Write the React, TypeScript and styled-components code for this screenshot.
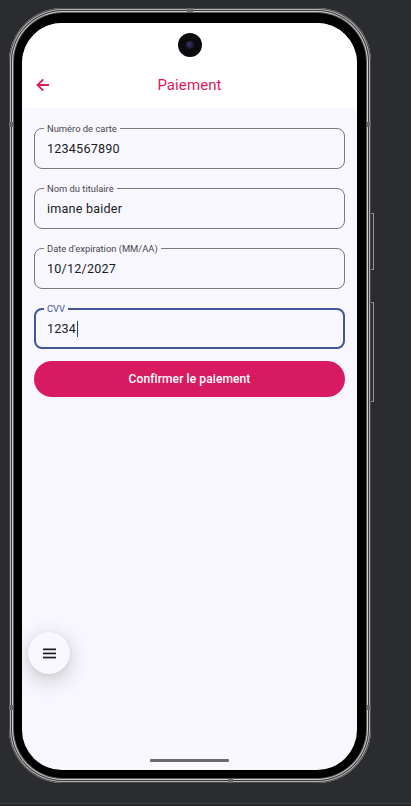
import React from "react";
import styled, { createGlobalStyle } from "styled-components";

const Global = createGlobalStyle`
  html, body { margin: 0; padding: 0; background: #2b2c30; }
  body { font-family: Roboto, "Noto Sans", Arial, sans-serif; }
  * { box-sizing: border-box; }
`;

const Page = styled.div`
  width: 411px;
  height: 806px;
  display: flex;
  flex-direction: column;
  overflow: hidden;
  background: #2b2c30;
`;

const Stage = styled.div`
  flex: 1;
  padding: 8px 0 0 9px;
`;

const BottomEdge = styled.div`
  height: 3px;
  border-top: 1px solid #3d3e42;
  background: #27282c;
`;

const Device = styled.div`
  position: relative;
  width: 362px;
  height: 775px;
  border-radius: 54px;
  background: #000;
  padding: 15px 14px 13px 13px;
  box-shadow:
    inset 0 0 0 1px #4a4a4a,
    inset 0 0 0 2px #b4b4b4,
    inset 0 0 0 3px #3a3a3a,
    inset 0 0 0 4px #cfcfcf,
    inset 0 0 0 5px #575757;
`;

const SideKey = styled.div<{ $top: number; $height: number }>`
  position: absolute;
  right: -3px;
  top: ${(p) => p.$top}px;
  width: 3px;
  height: ${(p) => p.$height}px;
  border-radius: 1px;
  border: 1px solid #9a9a9a;
  border-left: none;
  background: #2b2c30;
`;

const Band = styled.div<{ $side: "left" | "right" | "top" | "bottom"; $at: number }>`
  position: absolute;
  background: #6a6a6a;
  ${(p) =>
    p.$side === "left"
      ? `left: 0; top: ${p.$at}px; width: 4px; height: 5px;`
      : p.$side === "right"
      ? `right: 0; top: ${p.$at}px; width: 4px; height: 5px;`
      : p.$side === "top"
      ? `top: 0; left: ${p.$at}px; width: 6px; height: 4px;`
      : `bottom: 0; left: ${p.$at}px; width: 5px; height: 4px;`}
`;

const Screen = styled.div`
  position: relative;
  width: 335px;
  height: 747px;
  border-radius: 40px;
  overflow: hidden;
  background: #f8f7fd;
  display: flex;
  flex-direction: column;
`;

const Header = styled.header`
  background: #ffffff;
  display: flex;
  flex-direction: column;
`;

const CameraRow = styled.div`
  height: 41px;
  display: flex;
  justify-content: center;
  padding-top: 10px;
`;

const Camera = styled.div`
  width: 24px;
  height: 24px;
  border-radius: 50%;
  background: #0b0b0d;
  display: flex;
  align-items: center;
  justify-content: center;
  &::after {
    content: "";
    width: 8px;
    height: 8px;
    border-radius: 50%;
    background: radial-gradient(circle at 40% 40%, #3b3570 0%, #1b1a2e 60%, #0b0b0d 100%);
  }
`;

const AppBar = styled.div`
  height: 44px;
  padding-bottom: 4px;
  display: grid;
  grid-template-columns: 48px 1fr 48px;
  align-items: center;
`;

const BackButton = styled.div`
  display: flex;
  align-items: center;
  padding-left: 14px;
  padding-top: 1px;
`;

const Title = styled.h1`
  margin: 0;
  text-align: center;
  font-size: 15px;
  font-weight: 400;
  color: #d81b60;
  letter-spacing: 0.1px;
  padding-top: 1px;
`;

const Content = styled.main`
  flex: 1;
  display: flex;
  flex-direction: column;
  padding: 20px 12px 0 12px;
`;

const Fields = styled.div`
  display: flex;
  flex-direction: column;
  gap: 19px;
`;

const Field = styled.div<{ $focused?: boolean }>`
  position: relative;
  height: 41px;
  border-radius: 8px;
  border: ${(p) => (p.$focused ? "2px solid #43549b" : "1px solid #7a777f")};
  display: flex;
  align-items: center;
  padding-left: ${(p) => (p.$focused ? "11px" : "12px")};
`;

const Label = styled.span<{ $focused?: boolean }>`
  position: absolute;
  left: ${(p) => (p.$focused ? "8px" : "9px")};
  top: ${(p) => (p.$focused ? "-7px" : "-6px")};
  padding: 0 3px;
  background: #f8f7fd;
  font-size: 9.4px;
  line-height: 11px;
  color: ${(p) => (p.$focused ? "#43549b" : "#49454f")};
`;

const Value = styled.span`
  font-size: 12.6px;
  color: #1c1b1f;
  letter-spacing: 0.2px;
  display: flex;
  align-items: center;
`;

const Caret = styled.span`
  display: inline-block;
  width: 1.2px;
  height: 16px;
  margin-left: 1px;
  background: #2f3f7f;
`;

const PayButton = styled.button`
  margin-top: 12px;
  height: 36px;
  width: 100%;
  border: none;
  border-radius: 18px;
  background: #d81b60;
  color: #ffffff;
  font-family: Roboto, "Noto Sans", Arial, sans-serif;
  font-size: 12px;
  font-weight: 500;
  letter-spacing: 0.1px;
`;

const Fab = styled.div`
  position: absolute;
  left: 6px;
  top: 609px;
  width: 42px;
  height: 42px;
  border-radius: 50%;
  background: #f8f7fd;
  box-shadow: 0 6px 22px rgba(0, 0, 0, 0.2), 0 1px 4px rgba(0, 0, 0, 0.08);
  display: flex;
  align-items: center;
  justify-content: center;
`;

const HomeBar = styled.div`
  margin-top: auto;
  margin-bottom: 8px;
  align-self: center;
  width: 79px;
  height: 3px;
  border-radius: 1px;
  background: #6b6b6b;
`;

const fields = [
  { label: "Numéro de carte", value: "1234567890" },
  { label: "Nom du titulaire", value: "imane baider" },
  { label: "Date d'expiration (MM/AA)", value: "10/12/2027" },
  { label: "CVV", value: "1234", focused: true },
];

export default function App() {
  return (
    <Page>
      <Global />
      <Stage>
        <Device>
          <Band $side="top" $at={178} />
          <Band $side="bottom" $at={219} />
          <Band $side="left" $at={114} />
          <Band $side="right" $at={114} />
          <Band $side="left" $at={697} />
          <Band $side="right" $at={697} />
          <SideKey $top={205} $height={57} />
          <SideKey $top={294} $height={100} />
          <Screen>
            <Header>
              <CameraRow>
                <Camera />
              </CameraRow>
              <AppBar>
                <BackButton>
                  <svg width="13" height="12" viewBox="0 0 13 12" fill="none">
                    <path
                      d="M12.5 6H1.6M6.6 1L1.6 6L6.6 11"
                      stroke="#d81b60"
                      strokeWidth="1.8"
                      strokeLinecap="square"
                    />
                  </svg>
                </BackButton>
                <Title>Paiement</Title>
                <div />
              </AppBar>
            </Header>
            <Content>
              <Fields>
                {fields.map((f) => (
                  <Field key={f.label} $focused={f.focused}>
                    <Label $focused={f.focused}>{f.label}</Label>
                    <Value>
                      {f.value}
                      {f.focused && <Caret />}
                    </Value>
                  </Field>
                ))}
              </Fields>
              <PayButton>Confirmer le paiement</PayButton>
              <HomeBar />
            </Content>
            <Fab>
              <svg width="13" height="11" viewBox="0 0 13 11">
                <rect x="0" y="0.5" width="13" height="1.7" fill="#1c1b1f" />
                <rect x="0" y="4.6" width="13" height="1.7" fill="#1c1b1f" />
                <rect x="0" y="8.7" width="13" height="1.7" fill="#1c1b1f" />
              </svg>
            </Fab>
          </Screen>
        </Device>
      </Stage>
      <BottomEdge />
    </Page>
  );
}
